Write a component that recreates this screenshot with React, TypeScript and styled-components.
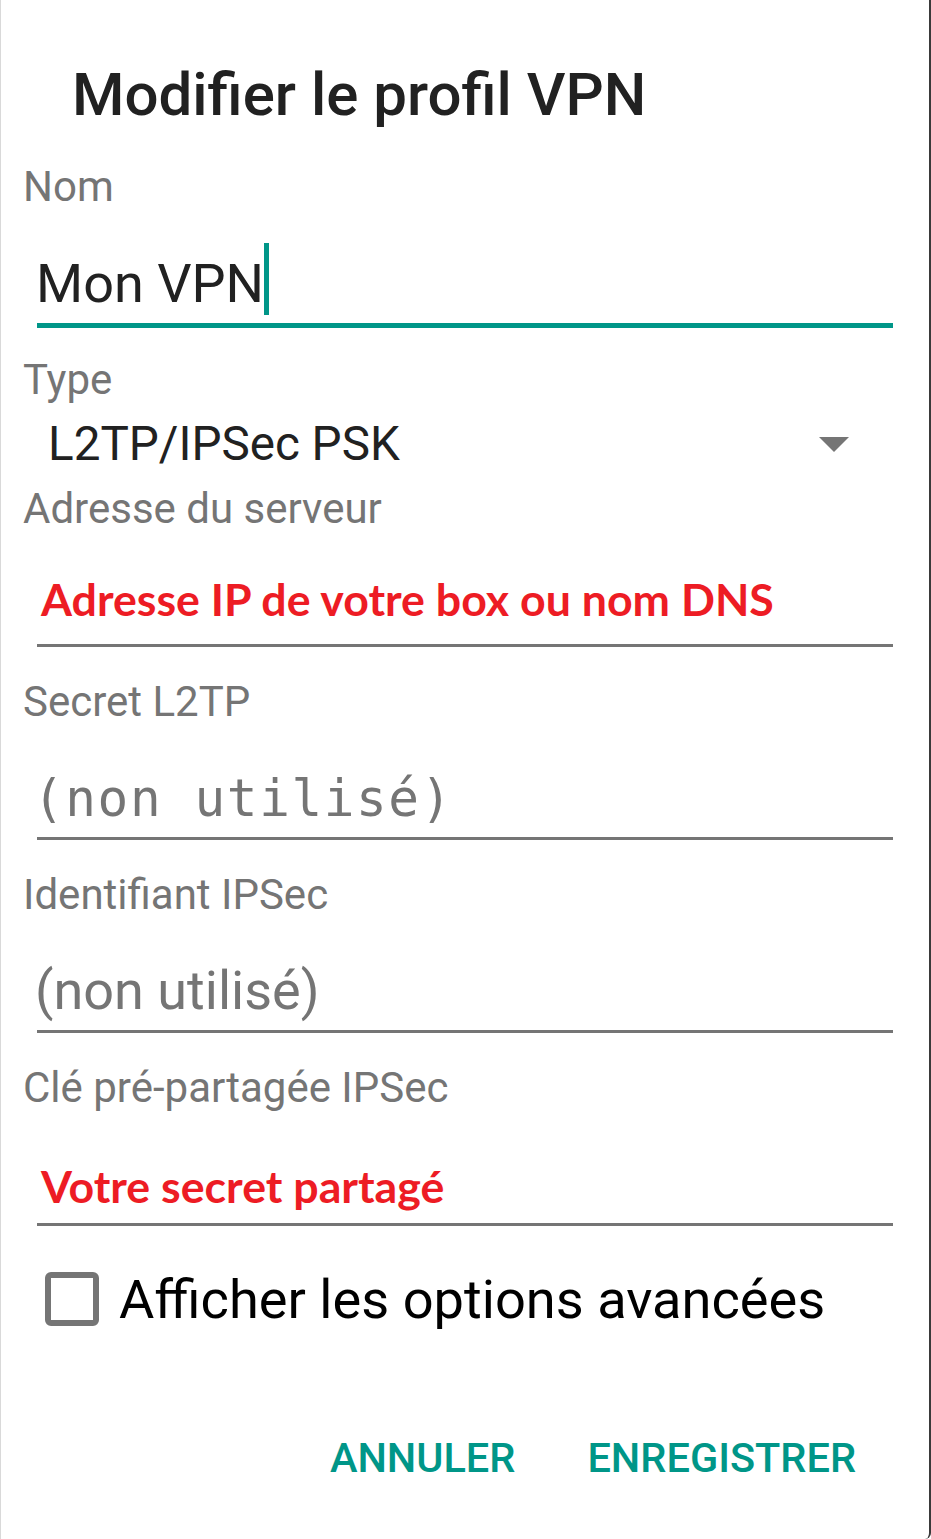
import styled, { createGlobalStyle } from "styled-components";

const GlobalStyle = createGlobalStyle`
  html, body {
    margin: 0;
    padding: 0;
    background: #ffffff;
  }
  * {
    box-sizing: border-box;
  }
`;

const Dialog = styled.div`
  width: 931px;
  height: 1539px;
  padding: 55px 36px 0 22px;
  background: #fff;
  border-left: 1px solid #d9d9d9;
  border-right: 2px solid #3a3a3a;
  border-bottom-right-radius: 6px;
  font-family: Roboto, "Liberation Sans", sans-serif;
  display: flex;
  flex-direction: column;
`;

const Title = styled.h1`
  margin: 0;
  padding-left: 49px;
  font-size: 60px;
  line-height: 80px;
  font-weight: 500;
  color: #212121;
`;

const Field = styled.div<{ $top: number }>`
  margin-top: ${(p) => p.$top}px;
  display: flex;
  flex-direction: column;
`;

const Label = styled.div`
  font-size: 42px;
  line-height: 48px;
  color: #757575;
`;

const ValueBox = styled.div<{ $focused?: boolean; $pb: number }>`
  margin-left: 14px;
  height: ${(p) => (p.$focused ? 117 : 114)}px;
  display: flex;
  align-items: flex-end;
  padding-bottom: ${(p) => p.$pb}px;
  border-bottom: ${(p) => (p.$focused ? 5 : 3)}px solid
    ${(p) => (p.$focused ? "#009688" : "#757575")};
`;

const InputText = styled.span<{ $kind: "text" | "hint" | "mono" | "note"; $indent: number }>`
  margin-left: ${(p) => p.$indent}px;
  line-height: 1;
  white-space: nowrap;
  ${(p) =>
    p.$kind === "text"
      ? `font-size: 54px; color: #212121;`
      : p.$kind === "hint"
      ? `font-size: 54px; color: #757575;`
      : p.$kind === "mono"
      ? `font-family: "DejaVu Sans Mono", monospace; font-size: 51px; color: #757575; letter-spacing: 1.6px;`
      : `font-family: Lato, "Open Sans", sans-serif; font-weight: 700; font-size: 44.7px; color: #ed1c24;`}
`;

const Cursor = styled.span`
  width: 5px;
  height: 72px;
  margin-bottom: -4px;
  background: #009688;
`;

const SelectRow = styled.div`
  height: 81px;
  display: flex;
  align-items: center;
  justify-content: space-between;
  padding: 0 44px 0 25px;
`;

const SelectValue = styled.span`
  font-size: 47.6px;
  line-height: 81px;
  color: #212121;
`;

const CheckRow = styled.label`
  margin-top: 46px;
  display: flex;
  align-items: center;
  gap: 20px;
  padding-left: 22px;
`;

const Box = styled.span`
  width: 54px;
  height: 54px;
  border: 6px solid #757575;
  border-radius: 6px;
`;

const CheckText = styled.span`
  font-size: 54.2px;
  line-height: 53px;
  color: #000;
`;

const Actions = styled.div`
  margin-top: 107px;
  display: flex;
  justify-content: flex-end;
  gap: 72px;
  padding-right: 37px;
`;

const ActionButton = styled.button`
  border: none;
  background: none;
  padding: 0;
  font-family: Roboto, "Liberation Sans", sans-serif;
  font-size: 41.5px;
  line-height: 50px;
  font-weight: 500;
  color: #009688;
`;

export default function App() {
  return (
    <>
      <GlobalStyle />
      <Dialog>
        <Title>Modifier le profil VPN</Title>

        <Field $top={28}>
          <Label>Nom</Label>
          <ValueBox $focused $pb={12}>
            <InputText $kind="text" $indent={-1}>
              Mon VPN
            </InputText>
            <Cursor />
          </ValueBox>
        </Field>

        <Field $top={28}>
          <Label>Type</Label>
          <SelectRow>
            <SelectValue>L2TP/IPSec PSK</SelectValue>
            <svg width="30" height="15" viewBox="0 0 30 15">
              <path d="M0 0 L30 0 L15 15 Z" fill="#757575" />
            </svg>
          </SelectRow>
        </Field>

        <Field $top={0}>
          <Label>Adresse du serveur</Label>
          <ValueBox $pb={22}>
            <InputText $kind="note" $indent={4}>
              Adresse IP de votre box ou nom DNS
            </InputText>
          </ValueBox>
        </Field>

        <Field $top={31}>
          <Label>Secret L2TP</Label>
          <ValueBox $pb={13}>
            <InputText $kind="mono" $indent={-4}>
              (non utilisé)
            </InputText>
          </ValueBox>
        </Field>

        <Field $top={31}>
          <Label>Identifiant IPSec</Label>
          <ValueBox $pb={12}>
            <InputText $kind="hint" $indent={-2}>
              (non utilisé)
            </InputText>
          </ValueBox>
        </Field>

        <Field $top={31}>
          <Label>Clé pré-partagée IPSec</Label>
          <ValueBox $pb={14}>
            <InputText $kind="note" $indent={4}>
              Votre secret partagé
            </InputText>
          </ValueBox>
        </Field>

        <CheckRow>
          <Box />
          <CheckText>Afficher les options avancées</CheckText>
        </CheckRow>

        <Actions>
          <ActionButton>ANNULER</ActionButton>
          <ActionButton>ENREGISTRER</ActionButton>
        </Actions>
      </Dialog>
    </>
  );
}
